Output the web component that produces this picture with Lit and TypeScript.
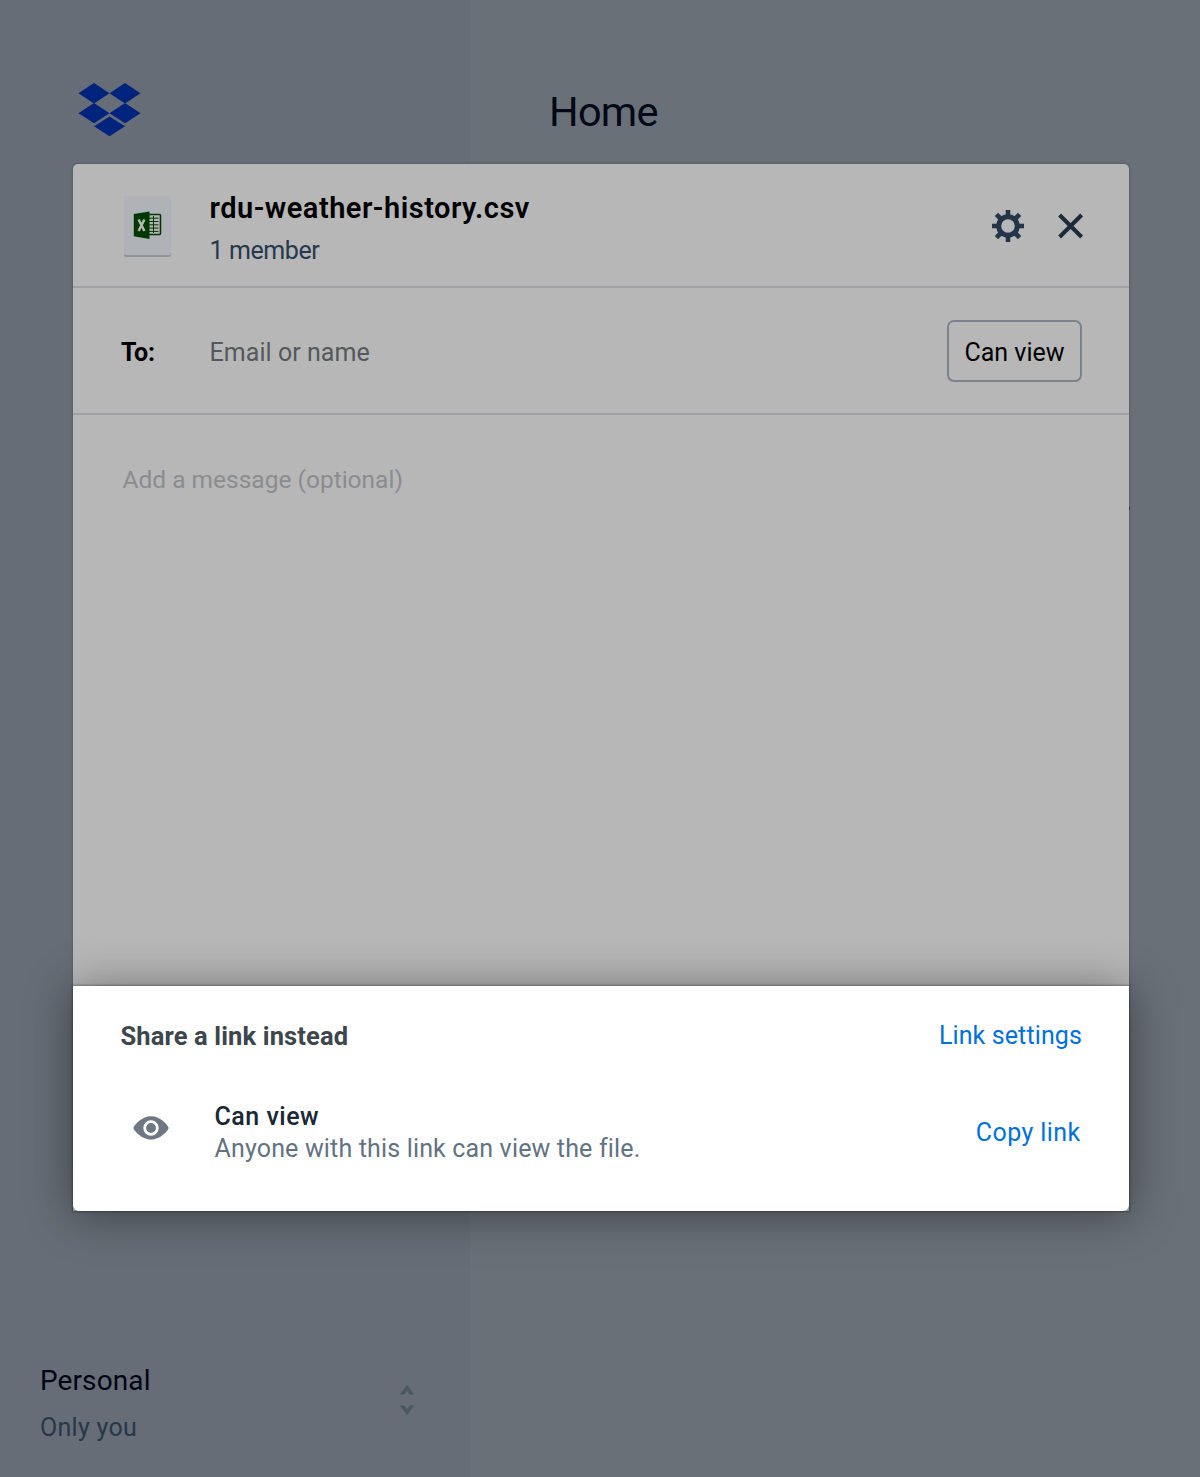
import { LitElement, html, css } from "lit";
import { customElement } from "lit/decorators.js";

@customElement("page-sidebar")
class PageSidebar extends LitElement {
  static styles = css`
    :host { display: flex; flex-direction: column; justify-content: space-between; box-sizing: border-box; height: 100%; padding: 83px 55px 29px 40px; background: #666d76; }
    .logo { display: block; width: 63px; height: 54px; margin-left: 38px; fill: #00247d; }
    .account { display: flex; justify-content: space-between; align-items: center; }
    .name { font-size: 28px; line-height: 40px; color: #010513; letter-spacing: 0.1px; }
    .detail { font-size: 25px; line-height: 40px; margin-top: 7px; color: #26384a; letter-spacing: 0.3px; }
    .sort { display: block; width: 16px; height: 32px; margin-top: -9px; fill: #4d5862; }
  `;
  render() {
    return html`
      <svg class="logo" viewBox="0 0 63 54">
        <path d="M16 0 31.5 10.2 16 20.4.5 10.2ZM47 0 62.5 10.2 47 20.4 31.5 10.2ZM16 20.1 31.5 30.2 16 40.3.5 30.2ZM47 20.1 62.5 30.2 47 40.3 31.5 30.2ZM31.5 33.4 47 43.3 31.5 53.3 16 43.3Z"/>
      </svg>
      <div class="account">
        <div><div class="name">Personal</div><div class="detail">Only you</div></div>
        <svg class="sort" viewBox="0 0 16 32"><path d="M8 .8 15.2 10.5H10.6L8 7 5.4 10.5H.8ZM8 31.2 15.2 21.5H10.6L8 25 5.4 21.5H.8Z"/></svg>
      </div>`;
  }
}

@customElement("share-dialog")
class ShareDialog extends LitElement {
  static styles = css`
    :host { display: flex; flex-direction: column; }
    .upper { box-sizing: border-box; height: 822px; background: #b7b7b7; border-radius: 5px 5px 0 0; box-shadow: 0 0 3px rgba(40, 50, 60, 0.45); }
    .head { display: flex; align-items: center; box-sizing: border-box; height: 124px; padding: 2px 44px 0 51px; border-bottom: 2px solid #a0a1a7; }
    .file { display: block; width: 47px; height: 62px; margin-top: 1px; }
    .title { flex: 1; margin: 4px 0 0 38.5px; }
    .fname { font-size: 29px; line-height: 36px; font-weight: 600; color: #000; letter-spacing: 0.5px; }
    .members { font-size: 25px; line-height: 32px; margin-top: 9px; color: #26394c; letter-spacing: -0.4px; }
    .gear { display: block; width: 34px; height: 34px; }
    .close { display: block; width: 28px; height: 28px; margin-left: 32px; }
    .to { display: flex; align-items: center; box-sizing: border-box; height: 127px; padding: 0 47px 0 48px; border-bottom: 2px solid #a0a1a7; }
    .label { width: 88.5px; padding-top: 4px; font-size: 25px; font-weight: 700; color: #000; letter-spacing: -0.3px; }
    .field { flex: 1; padding-top: 4px; font-size: 25px; color: #53595c; letter-spacing: 0.05px; }
    .perm { box-sizing: border-box; width: 135px; height: 62px; border: 2px solid #7c838c; border-radius: 7px; background: none; padding: 3px 0 0; font: 25px Roboto, "Liberation Sans", sans-serif; letter-spacing: 0; color: #000; }
    .message { padding: 49px 49.5px; font-size: 24.5px; line-height: 32px; letter-spacing: 0; color: #8b8c90; }
    .lower { position: relative; background: #8d949c; box-shadow: 0 0 2px 1px rgba(0, 0, 0, 0.3), 0 3px 44px rgba(0, 0, 0, 0.42); }
    .sheet { box-sizing: border-box; height: 225px; padding: 34px 47px 0 47.5px; background: #fff; border-radius: 0 0 6px 6px; }
    .row { display: flex; justify-content: space-between; align-items: center; }
    .heading { font-size: 25.5px; line-height: 32px; font-weight: 700; color: #3d464d; letter-spacing: 0.13px; }
    .link { font-size: 25px; line-height: 32px; color: #0070e0; letter-spacing: 0.12px; white-space: nowrap; }
    .link.copy { letter-spacing: 0.4px; }
    .linkrow { display: flex; align-items: center; margin-top: 49px; padding-right: 1.5px; }
    .eye { display: block; width: 36px; height: 24px; margin: -11px 45.5px 0 12.5px; }
    .info { flex: 1; }
    .mode { font-size: 25px; line-height: 32px; font-weight: 500; color: #1b2733; letter-spacing: 0.5px; }
    .explain { font-size: 25px; line-height: 32px; color: #637282; letter-spacing: 0.16px; }
  `;
  render() {
    return html`
      <div class="upper">
        <div class="head">
          <svg class="file" viewBox="0 0 47 62">
            <rect y="2" width="47" height="59" rx="2" fill="#8d949b"/><rect width="47" height="59" rx="2" fill="#afb2b6"/>
            <path d="M24 18.5H35.5Q36.5 18.5 36.5 19.5V37.5Q36.5 38.5 35.5 38.5H24Z" fill="#b2b6b3" stroke="#003800" stroke-width="1.6"/>
            <path d="M25 22.2H34.5M25 25.5H34.5M25 28.8H34.5M25 32.1H34.5M25 35.4H34.5" stroke="#003800" stroke-width="1"/><path d="M29.5 20V37" stroke="#003800" stroke-width="1"/>
            <path d="M9.8 18 25.5 15.5V43L9.8 40.3Z" fill="#003800"/>
            <path d="M14.6 23.5 20.4 35M20.4 23.5 14.6 35" stroke="#b2b6b3" stroke-width="2.5"/>
          </svg>
          <div class="title"><div class="fname">rdu-weather-history.csv</div><div class="members">1 member</div></div>
          <svg class="gear" viewBox="-17 -17 34 34" fill="none" stroke="#233649">
            <circle r="9.3" stroke-width="5"/>
            <path d="M0-16V-10M0 16V10M-16 0H-10M16 0H10M-11.6-11.6-7-7M11.6 11.6 7 7M-11.6 11.6-7 7M11.6-11.6 7-7" stroke-width="4.6"/>
          </svg>
          <svg class="close" viewBox="0 0 28 28"><path d="M2.6 3 24.6 25M24.6 3 2.6 25" stroke="#1c2b3a" stroke-width="4"/></svg>
        </div>
        <div class="to"><div class="label">To:</div><div class="field">Email or name</div><button class="perm">Can view</button></div>
        <div class="message">Add a message (optional)</div>
      </div>
      <div class="lower"><div class="sheet">
        <div class="row"><div class="heading">Share a link instead</div><div class="link">Link settings</div></div>
        <div class="linkrow">
          <svg class="eye" viewBox="0 0 36 24"><path d="M.3 12C1.2 8.6 9.5.3 18 .3S34.8 8.6 35.7 12C34.8 15.4 26.5 23.7 18 23.7S1.2 15.4.3 12Z" fill="#6f7783"/><circle cx="18" cy="12" r="6.3" fill="#6f7783" stroke="#fff" stroke-width="2.8"/></svg>
          <div class="info"><div class="mode">Can view</div><div class="explain">Anyone with this link can view the file.</div></div>
          <div class="link copy">Copy link</div>
        </div>
      </div></div>`;
  }
}

@customElement("app-root")
class AppRoot extends LitElement {
  static styles = css`
    :host { display: block; position: relative; width: 1200px; height: 1477px; overflow: hidden; font-family: Roboto, "Liberation Sans", sans-serif; }
    .page { display: grid; grid-template-columns: 469.5px 1fr; height: 100%; }
    .main { background: #697077; padding: 86.5px 79.5px; }
    .heading { margin: 0; font-size: 41.5px; line-height: 50px; font-weight: 400; color: #030817; letter-spacing: -0.7px; }
    .speck { position: absolute; left: 1128px; top: 507px; width: 2px; height: 3px; background: #39424c; }
    .dialog { position: absolute; left: 73px; top: 164px; width: 1056px; }
  `;
  render() {
    return html`<div class="page"><page-sidebar></page-sidebar><main class="main"><h1 class="heading">Home</h1></main></div>
      <span class="speck"></span>
      <share-dialog class="dialog"></share-dialog>`;
  }
}
